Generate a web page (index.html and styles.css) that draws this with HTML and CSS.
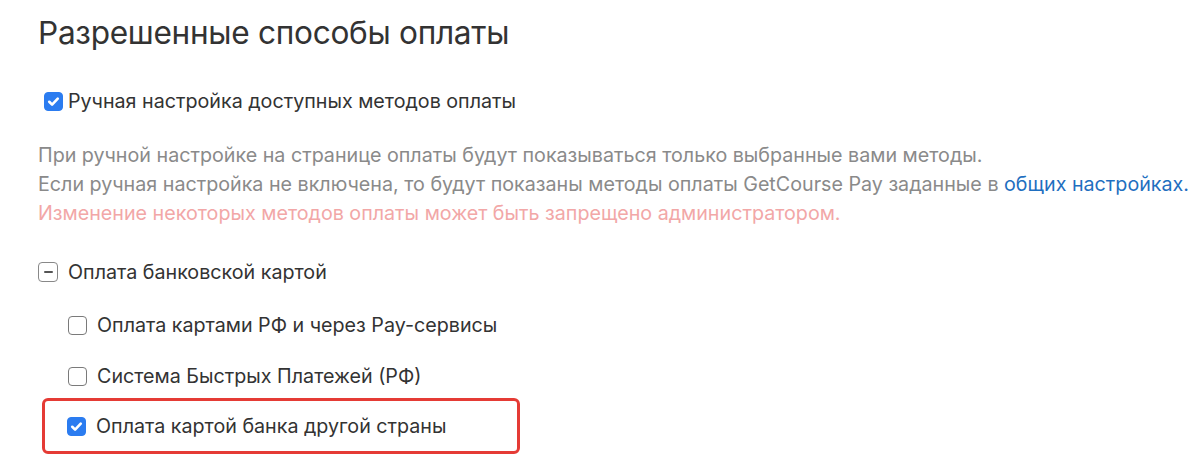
FILE: index.html
```html
<!DOCTYPE html>
<html lang="ru">
<head>
    <meta charset="UTF-8">
    <title>Разрешенные способы оплаты</title>
    <link rel="stylesheet" href="styles.css">
</head>
<body>
    <div class="settings">
        <h1>Разрешенные способы оплаты</h1>

        <label class="check-row manual">
            <span class="box checked">
                <svg viewBox="0 0 18 18"><path d="M4.5 9.3l3 3 6-6.3" /></svg>
            </span>
            Ручная настройка доступных методов оплаты
        </label>

        <div class="hint">
            <p>При ручной настройке на странице оплаты будут показываться только выбранные вами методы.</p>
            <p>Если ручная настройка не включена, то будут показаны методы оплаты GetCourse Pay заданные в <a href="#">общих настройках.</a></p>
            <p class="warn">Изменение некоторых методов оплаты может быть запрещено администратором.</p>
        </div>

        <div class="group">
            <label class="check-row">
                <span class="box partial"><i></i></span>
                Оплата банковской картой
            </label>

            <div class="group-items">
                <label class="check-row">
                    <span class="box"></span>
                    Оплата картами РФ и через Pay-сервисы
                </label>
                <label class="check-row">
                    <span class="box"></span>
                    Система Быстрых Платежей (РФ)
                </label>
                <label class="check-row highlight">
                    <span class="box checked">
                        <svg viewBox="0 0 18 18"><path d="M4.5 9.3l3 3 6-6.3" /></svg>
                    </span>
                    Оплата картой банка другой страны
                </label>
            </div>
        </div>
    </div>
</body>
</html>
```

FILE: styles.css
```css
:root {
    --text-color: #333;
    --muted-color: #8a8a8a;
    --warn-color: #f2a7a7;
    --link-color: #1f6fc0;
    --check-color: #2b7cf0;
    --mark-color: #e53b35;
}

* {
    margin: 0;
    padding: 0;
    box-sizing: border-box;
}

body {
    font-family: Inter, 'Noto Sans', sans-serif;
    color: var(--text-color);
    background: #fff;
}

.settings {
    padding: 13px 0 0 38px;
}

h1 {
    font-size: 31.6px;
    font-weight: 400;
    line-height: 40px;
    letter-spacing: -0.3px;
    margin-bottom: 36px;
}

.check-row {
    display: flex;
    align-items: center;
    gap: 10px;
    font-size: 19.7px;
    line-height: 24px;
    cursor: pointer;
}

.manual {
    margin-left: 6px;
    gap: 5px;
}

.box {
    width: 19px;
    height: 19px;
    flex-shrink: 0;
    border: 1.5px solid #7a7a7a;
    border-radius: 4px;
    background: #fff;
    display: flex;
    align-items: center;
    justify-content: center;
}

.box.checked {
    background: var(--check-color);
    border-color: var(--check-color);
}

.box svg {
    width: 17px;
    height: 17px;
    fill: none;
    stroke: #fff;
    stroke-width: 2.8;
    stroke-linecap: round;
    stroke-linejoin: round;
}

.box.partial {
    width: 20px;
    height: 20px;
    border-color: #888;
}

.box.partial i {
    width: 9px;
    height: 2.5px;
    border-radius: 1px;
    background: #555;
}

.hint {
    margin-top: 28px;
    font-size: 19.7px;
    line-height: 29px;
    color: var(--muted-color);
}

.hint a {
    color: var(--link-color);
    text-decoration: none;
}

.warn {
    color: var(--warn-color);
}

.group {
    margin-top: 32px;
}

.group-items {
    display: flex;
    flex-direction: column;
    gap: 27px;
    margin-top: 29px;
    padding-left: 30px;
}

.highlight {
    margin-left: -26px;
    margin-top: -17px;
    padding: 13px 0 13px 22px;
    width: 478px;
    border: 3px solid var(--mark-color);
    border-radius: 6px;
}
```
